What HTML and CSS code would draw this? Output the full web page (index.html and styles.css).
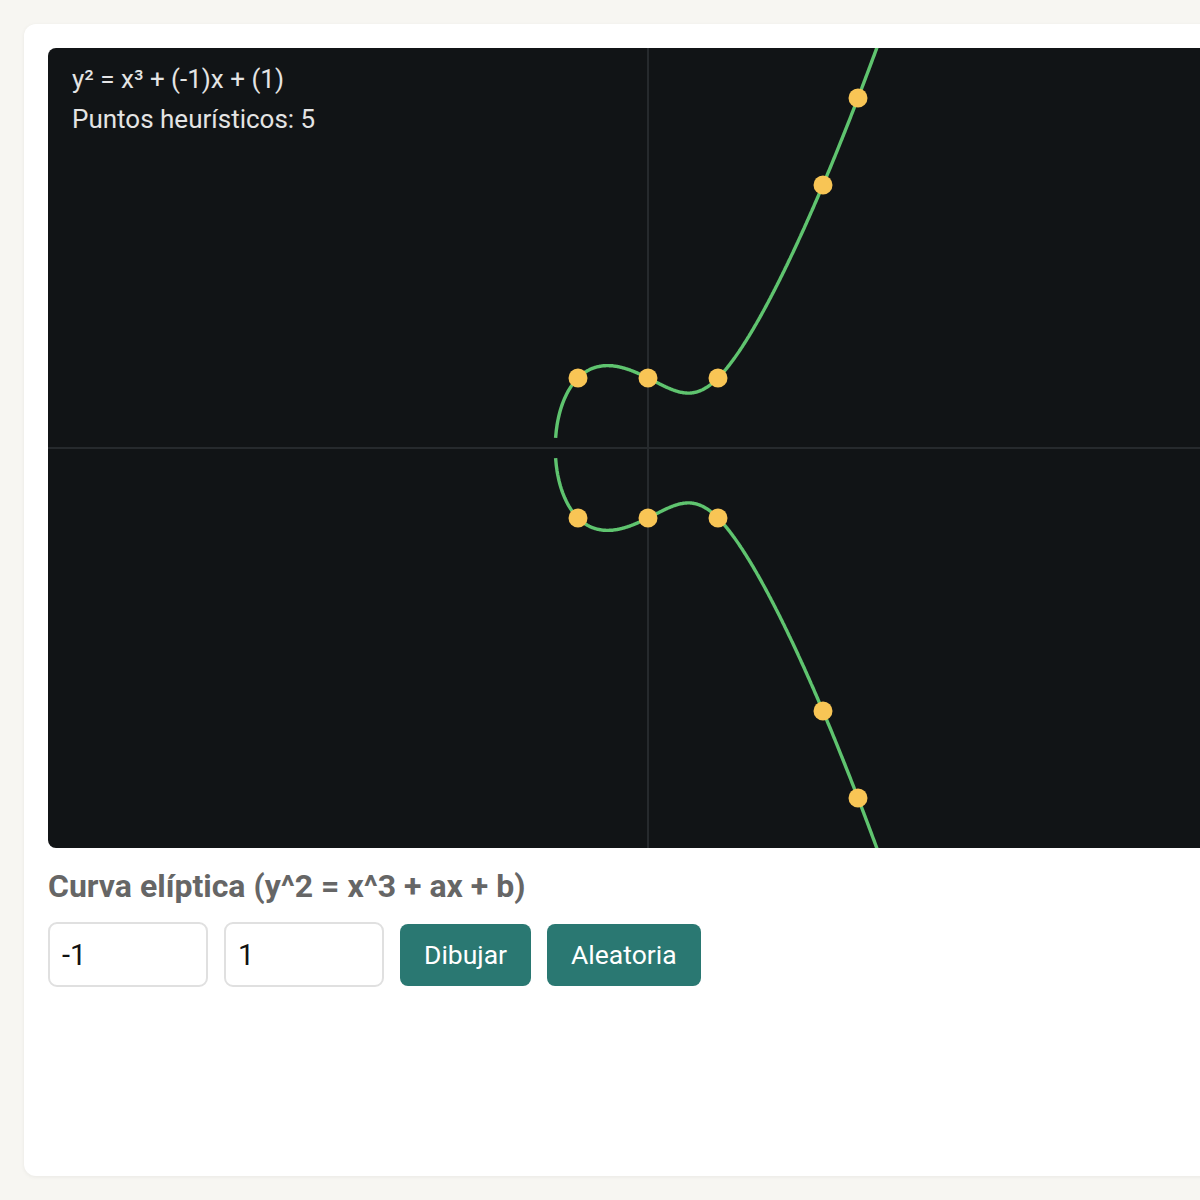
FILE: index.html
```html
<!DOCTYPE html>
<html lang="es">
<head>
<meta charset="UTF-8">
<title>Curva elíptica</title>
<link rel="stylesheet" href="styles.css">
</head>
<body>

<div class="card">
    <svg class="plot" id="plot" width="1200" height="800" viewBox="0 0 1200 800">
        <rect width="1200" height="800" fill="#111416"/>
        <line class="axis" x1="600" y1="0" x2="600" y2="800"/>
        <line class="axis" x1="0" y1="400" x2="1200" y2="400"/>
        <path class="curve" id="upper" d=""/>
        <path class="curve" id="lower" d=""/>
        <g id="points"></g>
        <text class="label" x="24" y="40">y² = x³ + (-1)x + (1)</text>
        <text class="label" x="24" y="80">Puntos heurísticos: 5</text>
    </svg>

    <h2 class="title">Curva elíptica (y^2 = x^3 + ax + b)</h2>

    <div class="controls">
        <input type="text" class="coef" id="a" value="-1">
        <input type="text" class="coef" id="b" value="1">
        <button class="btn">Dibujar</button>
        <button class="btn">Aleatoria</button>
    </div>
</div>

<script>
const scale = 70;
const cx = 600;
const cy = 400;
const a = -1;
const b = 1;

function f(x) {
    return x * x * x + a * x + b;
}

// find the left root
let root = -3;
while (f(root) < 0) root += 0.0001;

let up = [];
let down = [];
for (let x = root + 0.005; x < 3.7; x += 0.01) {
    let y = Math.sqrt(f(x));
    let px = (cx + x * scale).toFixed(1);
    up.push(px + ',' + (cy - y * scale).toFixed(1));
    down.push(px + ',' + (cy + y * scale).toFixed(1));
}
document.getElementById('upper').setAttribute('d', 'M' + up.join(' L'));
document.getElementById('lower').setAttribute('d', 'M' + down.join(' L'));

const xs = [-1, 0, 1, 2.5, 3];
const g = document.getElementById('points');
xs.forEach(function(x) {
    let y = Math.sqrt(f(x));
    [y, -y].forEach(function(v) {
        let c = document.createElementNS('http://www.w3.org/2000/svg', 'circle');
        c.setAttribute('cx', cx + x * scale);
        c.setAttribute('cy', cy - v * scale);
        c.setAttribute('r', 9.5);
        c.setAttribute('class', 'pt');
        g.appendChild(c);
    });
});
</script>

</body>
</html>
```

FILE: styles.css
```css
html, body {
    margin: 0;
    padding: 0;
}
body {
    background: #f7f6f2;
    font-family: Roboto, "Noto Sans", sans-serif;
    padding: 24px;
}
.card {
    background: #fff;
    border-radius: 12px;
    box-shadow: 0 1px 4px rgba(0, 0, 0, 0.06);
    padding: 24px;
    width: 1200px;
    min-height: calc(100vh - 96px);
}
.plot {
    display: block;
    border-radius: 8px;
}
.axis {
    stroke: #262a2d;
    stroke-width: 2;
}
.curve {
    fill: none;
    stroke: #5fc46f;
    stroke-width: 3.4;
    stroke-linejoin: round;
}
.pt {
    fill: #f8c555;
}
.label {
    fill: #e4e4e4;
    font-family: Roboto, sans-serif;
    font-size: 26px;
}
.title {
    color: #666;
    font-size: 32px;
    font-weight: 700;
    margin: 19px 0 17px;
}
.controls {
    display: flex;
    align-items: center;
    gap: 16px;
}
.coef {
    box-sizing: border-box;
    width: 160px;
    height: 65px;
    border: 2px solid #e0e0e0;
    border-radius: 9px;
    padding: 0 12px;
    font-family: Roboto, sans-serif;
    font-size: 29px;
    color: #111;
}
.btn {
    height: 62px;
    padding: 0 24px;
    border: none;
    border-radius: 8px;
    background: #2a7872;
    color: #fff;
    font-family: Roboto, sans-serif;
    font-size: 26.5px;
    cursor: pointer;
}
```
